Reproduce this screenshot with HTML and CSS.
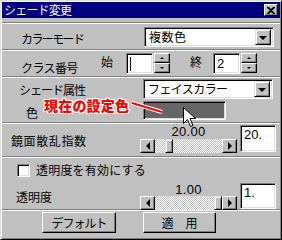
FILE: index.html
```html
<!DOCTYPE html>
<html lang="ja">
<head>
<meta charset="utf-8">
<link rel="stylesheet" href="styles.css">
</head>
<body>
<div class="win">
  <div class="title">
    <span class="title-text">シェード変更</span>
    <span class="xbtn"><svg width="8" height="7" viewBox="0 0 8 7"><path d="M0 0h2l2 2 2-2h2v1L5 3.5 8 6v1H6L4 5 2 7H0V6l3-2.5L0 1z" fill="#000"/></svg></span>
  </div>
  <div class="sep sep-first"></div>
  <div class="sec s1">
    <span class="lbl l-mode">カラーモード</span>
    <div class="combo c1"><span class="ctext">複数色</span><span class="dd"><i class="tri"></i></span></div>
  </div>
  <div class="sep"></div>
  <div class="sec s2">
    <span class="lbl l-class">クラス番号</span>
    <span class="sm s-start">始</span>
    <div class="field f-num"><span class="caret"></span></div>
    <div class="spin"><span class="sb"><i class="up"></i></span><span class="sb"><i class="dn"></i></span></div>
    <span class="sm s-end">終</span>
    <div class="field f-num"><span class="ftext">2</span></div>
    <div class="spin"><span class="sb"><i class="up"></i></span><span class="sb"><i class="dn"></i></span></div>
  </div>
  <div class="sep"></div>
  <div class="sec s3">
    <div class="line l1">
      <span class="lbl l-shade">シェード属性</span>
      <div class="combo c2"><span class="ctext">フェイスカラー</span><span class="dd"><i class="tri"></i></span></div>
    </div>
    <div class="line l2">
      <span class="lbl l-color">色</span>
      <div class="swatch"></div>
    </div>
    <span class="note">現在の設定色</span>
    <svg class="pointer" width="40" height="14" viewBox="0 0 40 14"><path d="M1 2 L31 11" stroke="#fff" stroke-width="4"/><path d="M1 2 L31 11" stroke="#f00" stroke-width="2"/></svg>
    <svg class="cursor" width="14" height="22" viewBox="0 0 14 22"><path d="M0.5 0.5 V16.5 L4.5 12.5 L7.5 19.5 L10 18.5 L7 11.5 H12.5 Z" fill="#fff" stroke="#000" stroke-width="1"/></svg>
  </div>
  <div class="sep"></div>
  <div class="sec s4">
    <span class="lbl l-spec">鏡面散乱指数</span>
    <div class="slidecol">
      <span class="val">20.00</span>
      <div class="sbar">
        <span class="abtn"><i class="lt"></i></span>
        <span class="trough"><span class="thumb" style="margin-left:10px"></span></span>
        <span class="abtn"><i class="rt"></i></span>
      </div>
    </div>
    <div class="field f-val"><span class="ftext">20.</span></div>
  </div>
  <div class="sep"></div>
  <div class="sec s5">
    <div class="chkline"><span class="chk"></span><span class="chklbl">透明度を有効にする</span></div>
    <div class="trline">
      <span class="lbl l-tr">透明度</span>
      <div class="slidecol">
        <span class="val">1.00</span>
        <div class="sbar">
          <span class="abtn"><i class="lt"></i></span>
          <span class="trough"><span class="thumb" style="margin-left:59px"></span></span>
          <span class="abtn"><i class="rt"></i></span>
        </div>
      </div>
      <div class="field f-val2"><span class="ftext">1.</span></div>
    </div>
  </div>
  <div class="sep"></div>
  <div class="sec s6">
    <span class="btn b-def">デフォルト</span>
    <span class="btn b-apply">適　用</span>
  </div>
</div>
</body>
</html>
```
FILE: styles.css
```css
html, body {
  margin: 0;
  padding: 0;
  background: #c0c0c0;
}
body {
  width: 282px;
  height: 240px;
  overflow: hidden;
  font-family: "Noto Sans CJK JP", sans-serif;
  font-size: 12px;
  color: #000;
}
.win {
  position: relative;
  width: 282px;
  height: 240px;
  box-sizing: border-box;
  padding: 1px;
  background: #c0c0c0;
  border-top: 1px solid #dfdfdf;
  border-left: 1px solid #dfdfdf;
  border-right: 1px solid #000;
  border-bottom: 1px solid #000;
  box-shadow: inset 1px 1px 0 #fff, inset -1px -1px 0 #808080;
  display: flex;
  flex-direction: column;
}
.title {
  height: 16px;
  background: #000080;
  color: #fff;
  display: flex;
  align-items: center;
  justify-content: space-between;
  flex-shrink: 0;
}
.title-text {
  padding-left: 2px;
  font-size: 12px;
  line-height: 16px;
  letter-spacing: -0.8px;
}
.xbtn {
  width: 12px;
  height: 10px;
  margin-right: 2px;
  background: #c0c0c0;
  border-top: 1px solid #fff;
  border-left: 1px solid #fff;
  border-right: 1px solid #000;
  border-bottom: 1px solid #000;
  box-shadow: inset -1px -1px 0 #808080;
  display: flex;
  align-items: center;
  justify-content: center;
}
.sep {
  border-top: 1px solid #808080;
  border-bottom: 1px solid #fff;
  height: 0;
  flex-shrink: 0;
}
.sep-first { margin-top: 4px; }
.sec { flex-shrink: 0; position: relative; }
.lbl { white-space: nowrap; line-height: 14px; }

/* section 1 */
.s1 { height: 25px; display: flex; align-items: flex-start; }
.l-mode { margin: 8px 0 0 19px; width: 123px; letter-spacing: -1.6px; }
.combo {
  box-sizing: border-box;
  height: 20px;
  background: #fff;
  border-top: 1px solid #808080;
  border-left: 1px solid #808080;
  border-right: 1px solid #fff;
  border-bottom: 1px solid #fff;
  box-shadow: inset 1px 1px 0 #000, inset -1px -1px 0 #dfdfdf;
  display: flex;
  align-items: center;
  justify-content: space-between;
  padding: 2px;
}
.c1 { width: 130px; margin-top: 3px; }
.ctext { padding-left: 2px; line-height: 14px; white-space: nowrap; }
.c1 .ctext { letter-spacing: 0.5px; }
.dd {
  box-sizing: border-box;
  width: 16px;
  height: 16px;
  background: #c0c0c0;
  border-top: 1px solid #dfdfdf;
  border-left: 1px solid #dfdfdf;
  border-right: 1px solid #000;
  border-bottom: 1px solid #000;
  box-shadow: inset 1px 1px 0 #fff, inset -1px -1px 0 #808080;
  display: flex;
  align-items: center;
  justify-content: center;
}
.tri {
  width: 0; height: 0;
  border-left: 4px solid transparent;
  border-right: 4px solid transparent;
  border-top: 4px solid #000;
  margin-top: 1px;
}

/* section 2 */
.s2 { height: 25px; display: flex; align-items: flex-start; }
.l-class { margin: 10px 0 0 19px; width: 80px; letter-spacing: -0.6px; }
.sm { line-height: 14px; margin-top: 4px; }
.s-start { width: 25px; }
.s-end { margin-left: 20px; width: 23px; }
.field {
  box-sizing: border-box;
  background: #fff;
  border-top: 1px solid #808080;
  border-left: 1px solid #808080;
  border-right: 1px solid #fff;
  border-bottom: 1px solid #fff;
  box-shadow: inset 1px 1px 0 #000, inset -1px -1px 0 #dfdfdf;
  font-family: "Liberation Sans", "Noto Sans CJK JP", sans-serif;
  font-size: 13px;
}
.f-num { width: 27px; height: 21px; margin-top: 2px; padding: 3px 0 0 3px; }
.ftext { line-height: 14px; display: block; }
.caret { display: block; width: 1px; height: 14px; background: #000; }
.spin {
  margin: 2px 0 0 1px;
  width: 16px;
  display: flex;
  flex-direction: column;
}
.sb {
  box-sizing: border-box;
  height: 10px;
  width: 16px;
  background: #c0c0c0;
  border-top: 1px solid #fff;
  border-left: 1px solid #fff;
  border-right: 1px solid #000;
  border-bottom: 1px solid #000;
  box-shadow: inset -1px -1px 0 #808080;
  display: flex;
  align-items: center;
  justify-content: center;
}
.up { width: 0; height: 0; border-left: 2px solid transparent; border-right: 2px solid transparent; border-bottom: 2px solid #000; }
.dn { width: 0; height: 0; border-left: 2px solid transparent; border-right: 2px solid transparent; border-top: 2px solid #000; }

/* section 3 */
.s3 { height: 44px; }
.line { display: flex; align-items: flex-start; }
.l1 { height: 22px; }
.l-shade { margin: 5px 0 0 17px; width: 124px; letter-spacing: -1px; line-height: 13px; }
.c2 { width: 130px; margin-top: 1px; }
.c2 .ctext { letter-spacing: -0.6px; }
.l-color { margin: 6px 0 0 24px; width: 117px; }
.swatch {
  box-sizing: border-box;
  width: 83px;
  height: 19px;
  margin-top: 1px;
  background: #666;
  border-top: 1px solid #808080;
  border-left: 1px solid #808080;
  border-right: 1px solid #fff;
  border-bottom: 1px solid #fff;
  box-shadow: inset 1px 1px 0 #000, inset -1px -1px 0 #dfdfdf;
}
.note {
  position: absolute;
  left: 42px;
  top: 20px;
  color: #f00;
  font-weight: 900;
  font-size: 14px;
  line-height: 15px;
  letter-spacing: 0.2px;
  text-shadow: 1px 0 0 #fff, -1px 0 0 #fff, 0 1px 0 #fff, 0 -1px 0 #fff, 1px 1px 0 #fff, -1px -1px 0 #fff, 1px -1px 0 #fff, -1px 1px 0 #fff;
}
.pointer { position: absolute; left: 129px; top: 23px; }
.cursor { position: absolute; left: 181px; top: 29px; }

/* section 4 */
.s4 { height: 32px; display: flex; align-items: flex-start; }
.l-spec { margin: 10px 0 0 9px; width: 129px; letter-spacing: 0.6px; }
.slidecol { display: flex; flex-direction: column; align-items: center; width: 97px; }
.val {
  font-family: "Liberation Sans", sans-serif;
  font-size: 13px;
  line-height: 12px;
  height: 13px;
  letter-spacing: 0.3px;
}
.s4 .val { margin-top: 2px; }
.sbar { display: flex; height: 14px; width: 97px; }
.abtn {
  box-sizing: border-box;
  width: 15px;
  height: 14px;
  background: #c0c0c0;
  border-top: 1px solid #fff;
  border-left: 1px solid #fff;
  border-right: 1px solid #000;
  border-bottom: 1px solid #000;
  box-shadow: inset -1px -1px 0 #808080;
  display: flex;
  align-items: center;
  justify-content: center;
  flex-shrink: 0;
}
.lt { width: 0; height: 0; border-top: 4px solid transparent; border-bottom: 4px solid transparent; border-right: 4px solid #000; }
.rt { width: 0; height: 0; border-top: 4px solid transparent; border-bottom: 4px solid transparent; border-left: 4px solid #000; }
.trough {
  flex: 1;
  height: 14px;
  background-color: #fff;
  background-image: conic-gradient(#c0c0c0 25%, #fff 0 50%, #c0c0c0 0 75%, #fff 0);
  background-size: 2px 2px;
  display: flex;
}
.thumb {
  box-sizing: border-box;
  width: 8px;
  height: 14px;
  background: #c0c0c0;
  border-top: 1px solid #dfdfdf;
  border-left: 1px solid #dfdfdf;
  border-right: 1px solid #000;
  border-bottom: 1px solid #000;
  box-shadow: inset 1px 1px 0 #fff, inset -1px -1px 0 #808080;
}
.f-val { width: 36px; height: 27px; margin: 1px 0 0 3px; padding: 2px 0 0 3px; }
.f-val2 { width: 36px; height: 26px; margin: 4px 0 0 3px; padding: 2px 0 0 3px; }

/* section 5 */
.s5 { height: 51px; }
.chkline { display: flex; align-items: center; height: 16px; margin-top: 4px; }
.chk {
  box-sizing: border-box;
  width: 13px;
  height: 13px;
  margin-left: 15px;
  background: #fff;
  border-top: 1px solid #808080;
  border-left: 1px solid #808080;
  border-right: 1px solid #fff;
  border-bottom: 1px solid #fff;
  box-shadow: inset 1px 1px 0 #000, inset -1px -1px 0 #dfdfdf;
}
.chklbl { margin-left: 6px; line-height: 14px; letter-spacing: 0.2px; }
.trline { display: flex; align-items: flex-start; margin-top: 1px; }
.l-tr { margin: 11px 0 0 14px; width: 124px; }
.trline .val { margin-top: 5px; }
.trline .sbar { margin-top: -1px; }

/* section 6 */
.s6 { height: 24px; display: flex; align-items: flex-start; }
.btn {
  box-sizing: border-box;
  height: 21px;
  background: #c0c0c0;
  border-top: 1px solid #fff;
  border-left: 1px solid #fff;
  border-right: 1px solid #000;
  border-bottom: 1px solid #000;
  box-shadow: inset -1px -1px 0 #808080;
  display: flex;
  align-items: center;
  justify-content: center;
  line-height: 14px;
  margin-top: 1px;
}
.b-def { width: 74px; margin-left: 40px; letter-spacing: -1px; }
.b-apply { width: 73px; margin-left: 27px; }
```
